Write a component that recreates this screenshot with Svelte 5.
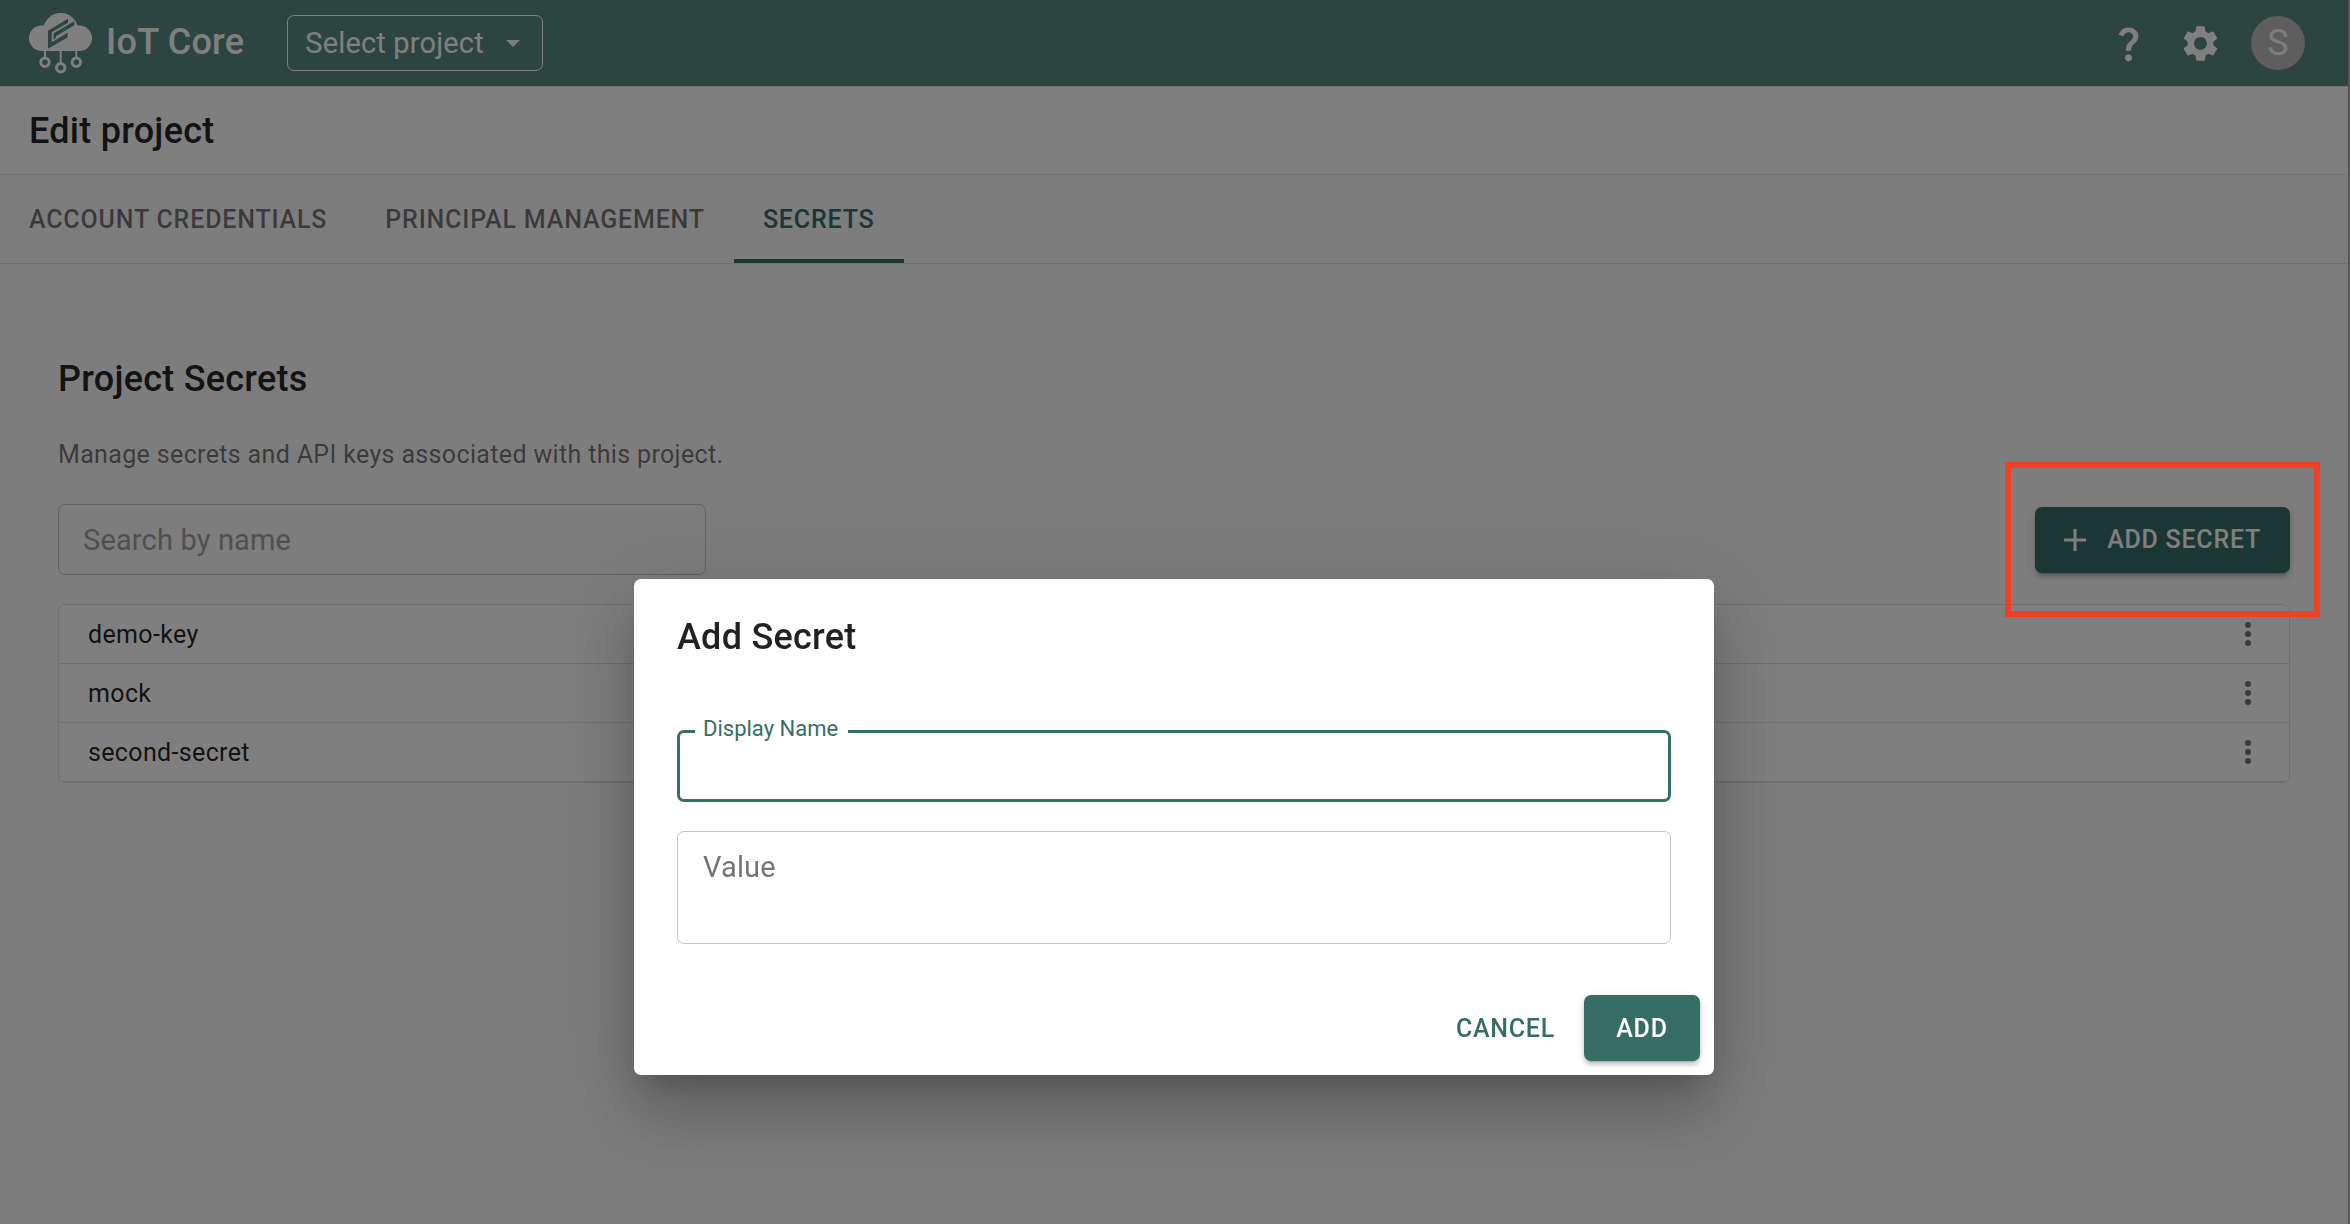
<script>
  const tabs = ['Account credentials', 'Principal management', 'Secrets'];
  const secrets = ['demo-key', 'mock', 'second-secret'];
  let active = $state('Secrets');
  let search = $state('');
  let displayName = $state('');
  let secretValue = $state('');
</script>

<div class="app">
  <header class="topbar">
    <a class="brand" href="#home">
      <svg class="logo" viewBox="0 0 64 64" aria-hidden="true">
        <g fill="currentColor">
          <circle cx="31.700" cy="19.500" r="17.500" />
          <rect x="0" y="14.500" width="63" height="25.500" rx="12.700" />
        </g>
        <path class="cut" d="M19 19.700 39 7.700v4L22.700 21.300v10L38.700 21.700v4.600L19 37.700z" />
        <path class="cut" d="M24.700 22.300 45.300 10.300v4L26.700 25.300v2L24.700 28.700z" />
        <g fill="none" stroke="currentColor" stroke-width="2">
          <path d="M16 39v8M31.700 39v14M47.300 39v8" />
          <g stroke-width="3">
            <circle cx="16" cy="51.300" r="4.200" /><circle cx="31.700" cy="56.700" r="4.200" /><circle cx="47.300" cy="51.300" r="4.200" />
          </g>
        </g>
      </svg>
      <span>IoT Core</span>
    </a>
    <div class="picker">
      <select aria-label="Select project">
        <option>Select project</option>
      </select>
      <svg viewBox="0 0 14 7" aria-hidden="true"><path fill="currentColor" d="M0 0h14L7 7z" /></svg>
    </div>
    <div class="actions">
      <button class="icon" aria-label="Help">
        <svg viewBox="0 0 24 24"><path fill="currentColor" d="M11.070 12.850c.77-1.390 2.250-2.210 3.110-3.440.91-1.290.4-3.700-2.180-3.700-1.690 0-2.520 1.280-2.870 2.340L6.540 6.960C7.250 4.830 9.180 3 11.990 3c2.350 0 3.960 1.070 4.780 2.410.7 1.150 1.110 3.300.03 4.900-1.200 1.770-2.350 2.310-2.970 3.450-.25.46-.35.76-.35 2.240h-2.890c-.01-.78-.13-2.050.48-3.150zM14 20c0 1.100-.9 2-2 2s-2-.9-2-2 .9-2 2-2 2 .9 2 2z" /></svg>
      </button>
      <button class="icon" aria-label="Settings">
        <svg viewBox="0 0 24 24"><path fill="currentColor" d="M19.140 12.940c.04-.3.06-.61.06-.94 0-.32-.02-.64-.07-.94l2.030-1.580c.18-.14.23-.41.12-.61l-1.920-3.320c-.12-.22-.37-.29-.59-.22l-2.390.96c-.5-.38-1.030-.7-1.620-.94l-.36-2.540c-.04-.24-.24-.41-.48-.41h-3.840c-.24 0-.43.17-.47.41l-.36 2.540c-.59.24-1.130.57-1.620.94l-2.390-.96c-.22-.08-.47 0-.59.22L2.740 8.870c-.12.21-.08.47.12.61l2.030 1.580c-.05.3-.09.63-.09.94s.02.64.07.94l-2.030 1.580c-.18.14-.23.41-.12.61l1.920 3.320c.12.22.37.29.59.22l2.390-.96c.5.38 1.030.7 1.620.94l.36 2.540c.05.24.24.41.48.41h3.840c.24 0 .44-.17.47-.41l.36-2.540c.59-.24 1.130-.56 1.620-.94l2.390.96c.22.08.47 0 .59-.22l1.920-3.320c.12-.22.07-.47-.12-.61l-2.010-1.580zM12 15.600c-1.980 0-3.600-1.620-3.600-3.600s1.620-3.600 3.600-3.600 3.600 1.620 3.600 3.600-1.620 3.600-3.600 3.600z" /></svg>
      </button>
      <button class="avatar" aria-label="Account">S</button>
    </div>
  </header>

  <div class="titlebar"><h1>Edit project</h1></div>

  <nav class="tabs">
    {#each tabs as tab}
      <button class:active={active === tab} onclick={() => (active = tab)}>{tab}</button>
    {/each}
  </nav>

  <main>
    <h2>Project Secrets</h2>
    <p>Manage secrets and API keys associated with this project.</p>
    <div class="toolbar">
      <input type="text" aria-label="Search by name" placeholder="Search by name" bind:value={search} />
      <button class="contained">
        <svg viewBox="0 0 22 22" aria-hidden="true"><path fill="currentColor" d="M0 9.500h9.500V0h3v9.500H22v3h-9.500V22h-3v-9.500H0z" /></svg>
        Add secret
      </button>
    </div>
    <div class="list">
      <table>
        <tbody>
          {#each secrets as name}
            <tr>
              <td>{name}</td>
              <td class="menu">
                <button aria-label="Options for {name}">
                  <svg viewBox="0 0 6 24"><circle cx="3" cy="3" r="3" /><circle cx="3" cy="12" r="3" /><circle cx="3" cy="21" r="3" /></svg>
                </button>
              </td>
            </tr>
          {/each}
        </tbody>
      </table>
    </div>
  </main>
</div>

<div class="backdrop">
  <div class="dialog" role="dialog" aria-modal="true" aria-labelledby="dialog-title">
    <h2 id="dialog-title">Add Secret</h2>
    <div class="fields">
      <div class="field focused">
        <label for="display-name">Display Name</label>
        <input id="display-name" type="text" bind:value={displayName} />
      </div>
      <div class="field">
        <label for="secret-value">Value</label>
        <textarea id="secret-value" bind:value={secretValue}></textarea>
      </div>
    </div>
    <div class="buttons">
      <button class="text">Cancel</button>
      <button class="contained">Add</button>
    </div>
  </div>
</div>
<div class="highlight"></div>

<style>
  :global(body) {
    font-family: Roboto, sans-serif;
    letter-spacing: 0.01em;
    color: rgba(0, 0, 0, 0.87);
    background: #fafafa;
  }
  :global(*) {
    box-sizing: border-box;
  }
  button, input, select, textarea {
    font: inherit;
    letter-spacing: inherit;
    color: inherit;
    background: none;
    border: 0;
    margin: 0;
    padding: 0;
    outline: 0;
  }
  h1, h2, p {
    margin: 0;
  }
  h1, h2 {
    font-size: 36px;
    line-height: 58px;
    font-weight: 500;
    letter-spacing: 0.007em;
  }
  svg {
    display: block;
  }
  .app {
    min-height: 100vh;
    border-right: 2px solid #aaa;
  }
  .topbar {
    display: flex;
    align-items: center;
    height: 86px;
    padding: 0 43px 0 29px;
    background: #588a82;
    color: #fff;
  }
  .brand {
    display: flex;
    align-items: center;
    gap: 13px;
    color: inherit;
    text-decoration: none;
    font-size: 36px;
    font-weight: 500;
    letter-spacing: 0.007em;
  }
  .brand span {
    padding-bottom: 3px;
  }
  .logo {
    width: 64px;
    height: 64px;
  }
  .cut {
    fill: #588a82;
  }
  .picker {
    position: relative;
    margin-left: 43px;
    width: 256px;
  }
  .picker select {
    appearance: none;
    width: 100%;
    height: 56px;
    padding: 0 17px;
    border: 1px solid #fff;
    border-radius: 7px;
    font-size: 29px;
  }
  .picker svg {
    position: absolute;
    right: 23px;
    top: 25px;
    width: 14px;
    height: 7px;
    pointer-events: none;
  }
  .actions {
    display: flex;
    align-items: center;
    gap: 29px;
    margin-left: auto;
  }
  .icon svg {
    width: 43px;
    height: 43px;
  }
  .avatar {
    width: 54px;
    height: 54px;
    border-radius: 50%;
    background: #bdbdbd;
    color: #fafafa;
    font-size: 36px;
  }
  .titlebar {
    display: flex;
    align-items: center;
    height: 89px;
    padding: 0 29px;
    background: #fff;
    border: solid #e0e0e0;
    border-width: 1px 0;
  }
  .tabs {
    display: flex;
    height: 89px;
    border-bottom: 1px solid #e0e0e0;
  }
  .tabs button {
    padding: 4px 29px 0;
    border-bottom: 4px solid transparent;
    font-size: 25px;
    font-weight: 500;
    letter-spacing: 0.033em;
    text-transform: uppercase;
    color: rgba(0, 0, 0, 0.54);
  }
  .tabs button.active {
    color: #366e66;
    border-color: #366e66;
  }
  main {
    padding: 86px 58px;
  }
  main p {
    margin-top: 29px;
    font-size: 25px;
    line-height: 36px;
    letter-spacing: 0.014em;
    color: rgba(0, 0, 0, 0.54);
  }
  .toolbar {
    display: flex;
    align-items: center;
    justify-content: space-between;
    margin: 31px 0 29px;
  }
  .toolbar input {
    width: 648px;
    height: 71px;
    padding: 0 24px;
    border: 1px solid #c4c4c4;
    border-radius: 7px;
    font-size: 29px;
  }
  .toolbar input::placeholder {
    color: #a1a1a1;
  }
  .contained, .text {
    display: flex;
    align-items: center;
    justify-content: center;
    height: 66px;
    padding: 0 29px;
    border-radius: 7px;
    font-size: 25px;
    font-weight: 500;
    letter-spacing: 0.03em;
    text-transform: uppercase;
  }
  .contained {
    gap: 21px;
    min-width: 116px;
    color: #fff;
    background: #366e66;
    box-shadow: 0 5px 2px -4px rgba(0, 0, 0, 0.2), 0 4px 4px rgba(0, 0, 0, 0.14), 0 2px 9px rgba(0, 0, 0, 0.12);
  }
  .contained svg {
    width: 22px;
    height: 22px;
  }
  .text {
    color: #366e66;
  }
  .list {
    border: 1px solid #e0e0e0;
    border-radius: 7px;
    background: #fff;
    overflow: hidden;
  }
  table {
    width: 100%;
    border-collapse: separate;
    border-spacing: 0;
  }
  td {
    height: 59px;
    padding: 0 29px;
    border-bottom: 1px solid #e0e0e0;
    font-size: 25px;
    letter-spacing: 0.014em;
  }
  .menu {
    width: 82px;
  }
  .menu button {
    display: block;
    padding: 0 9px;
  }
  .menu svg {
    width: 6px;
    height: 24px;
    fill: rgba(0, 0, 0, 0.54);
  }
  .backdrop {
    position: fixed;
    inset: 0;
    display: flex;
    align-items: flex-start;
    justify-content: center;
    padding: 579px 2px 0 0;
    background: rgba(0, 0, 0, 0.5);
  }
  .dialog {
    width: 1080px;
    border-radius: 7px;
    background: #fff;
    box-shadow: 0 20px 27px -13px rgba(0, 0, 0, 0.2), 0 43px 68px 5px rgba(0, 0, 0, 0.14), 0 16px 83px 14px rgba(0, 0, 0, 0.12);
  }
  .dialog h2 {
    padding: 29px 43px;
  }
  .fields {
    display: grid;
    gap: 29px;
    padding: 35px 43px 37px;
  }
  .field {
    position: relative;
    display: grid;
  }
  .field input, .field textarea {
    width: 100%;
    padding: 24px;
    border: 1px solid #c4c4c4;
    border-radius: 7px;
    font-size: 29px;
    resize: none;
  }
  .field input {
    height: 72px;
  }
  .field textarea {
    height: 113px;
  }
  .field label {
    position: absolute;
    left: 18px;
    top: 18px;
    padding: 0 8px;
    font-size: 29px;
    line-height: 36px;
    color: #757575;
  }
  .field.focused input {
    border: 3px solid #366e66;
  }
  .field.focused label {
    top: -19px;
    padding-right: 10px;
    background: #fff;
    font-size: 22px;
    letter-spacing: 0;
    color: #366e66;
  }
  .buttons {
    display: flex;
    justify-content: flex-end;
    padding: 14px;
  }
  .highlight {
    position: absolute;
    top: 462px;
    right: 30px;
    width: 315px;
    height: 155px;
    border: 6px solid #ee4227;
    pointer-events: none;
  }
</style>
